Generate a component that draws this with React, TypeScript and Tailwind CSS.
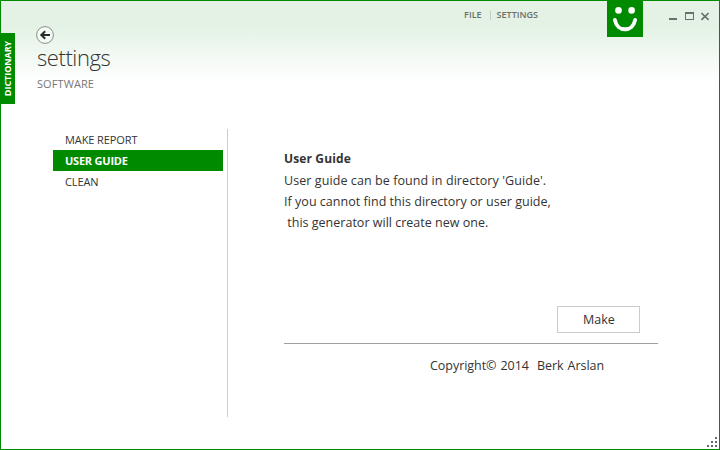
const menu = [
  { label: 'MAKE REPORT', active: false, spacing: 'tracking-[-0.09px]' },
  { label: 'USER GUIDE', active: true, spacing: 'tracking-[-0.22px]' },
  { label: 'CLEAN', active: false, spacing: 'tracking-[-0.1px]' },
];

const guideLines = [
  { text: "User guide can be found in directory 'Guide'.", spacing: 'tracking-[0.08px]' },
  { text: 'If you cannot find this directory or user guide,', spacing: 'tracking-[0.03px]' },
  { text: ' this generator will create new one.', spacing: 'tracking-[0.01px]' },
];

function DictionaryTab() {
  return (
    <div className="mt-8 flex h-[71px] w-[14px] items-center justify-center bg-[#008a00]">
      <span className="-rotate-90 whitespace-nowrap text-[9px] leading-none font-bold tracking-[-0.05px] text-white">DICTIONARY</span>
    </div>
  );
}

function BackIcon() {
  return (
    <svg className="-ml-px block" width="18" height="18" viewBox="0 0 18 18" fill="none">
      <circle cx="9" cy="9" r="8.4" fill="#f4faf4" stroke="#8a8d8a" strokeWidth="1" />
      <path d="M5.2 9H14" stroke="#2b2b2b" strokeWidth="2" />
      <path d="M9.2 5.2L5.3 9L9.2 12.8" stroke="#2b2b2b" strokeWidth="2" />
    </svg>
  );
}

function Smiley() {
  return (
    <svg className="block bg-[#008a00]" width="36" height="36" viewBox="0 0 36 36" fill="none">
      <circle cx="11.5" cy="9.4" r="3.3" fill="#fff" />
      <circle cx="24.6" cy="9.4" r="3.3" fill="#fff" />
      <path d="M7.9 19C10.2 31.4 25.8 31.4 28.1 19" stroke="#fff" strokeWidth="3.9" strokeLinecap="round" />
    </svg>
  );
}

function WindowControls() {
  return (
    <svg className="mt-[10px] ml-[25px] block" width="42" height="12" viewBox="0 0 42 12" fill="none" shapeRendering="crispEdges">
      <path d="M1 7H9V9H1Z" fill="#6b706b" />
      <path fillRule="evenodd" d="M17 1H26V9H17ZM18 3V8H25V3Z" fill="#6b706b" />
      <path d="M33.4 2L40.6 8.8M40.6 2L33.4 8.8" stroke="#6b706b" strokeWidth="1.7" shapeRendering="auto" />
    </svg>
  );
}

function SizeGrip() {
  return (
    <svg className="block" width="12" height="12" viewBox="0 0 12 12" fill="#686868" shapeRendering="crispEdges">
      <path d="M8 0h2v2h-2zM4 4h2v2h-2zM8 4h2v2h-2zM0 8h2v2h-2zM4 8h2v2h-2zM8 8h2v2h-2z" />
    </svg>
  );
}

export default function App() {
  return (
    <div className="flex h-[450px] w-[720px] flex-col overflow-hidden border border-[#008a00] bg-[linear-gradient(to_bottom,#e3f2e4_0px,#e3f2e4_25px,#ffffff_80px)] font-['Open_Sans','Noto_Sans',sans-serif] text-[#333]">
      <header className="flex h-[104px] shrink-0 items-start">
        <DictionaryTab />
        <div className="ml-[22px] pt-[25px]">
          <BackIcon />
          <h1 className="mt-[-3px] text-[22px] leading-[32px] font-light tracking-[-0.42px] text-[#333]">settings</h1>
          <div className="mt-[3px] text-[11px] leading-4 tracking-[0.08px] text-[#777]">SOFTWARE</div>
        </div>
        <nav className="mt-[8px] ml-auto flex items-center text-[9px] leading-3 font-semibold text-[#6b706b]">
          <span>FILE</span>
          <span className="mr-[6px] ml-[8px] h-[9px] w-px bg-[#c5cdc5]" />
          <span>SETTINGS</span>
        </nav>
        <div className="ml-[69px]">
          <Smiley />
        </div>
        <WindowControls />
        <div className="w-[9px]" />
      </header>

      <main className="flex h-[312px] shrink-0 pt-[24px]">
        <ul className="ml-[52px] w-[170px] text-[11px] leading-[21px]">
          {menu.map((item) => (
            <li key={item.label} className={`pl-3 ${item.spacing} ${item.active ? 'bg-[#008a00] font-bold text-white' : ''}`}>
              {item.label}
            </li>
          ))}
        </ul>
        <div className="ml-1 w-px bg-[#ccc]" />
        <section className="ml-14 flex w-[374px] flex-col pt-[19px] text-[13px] leading-[21px]">
          <h2 className="mb-px text-[12px] font-bold tracking-[0.13px]">User Guide</h2>
          {guideLines.map((line) => (
            <p key={line.text} className={`whitespace-pre text-[12.5px] ${line.spacing}`}>{line.text}</p>
          ))}
          <button className="mt-[73px] mr-[18px] h-[27px] w-[83px] self-end border border-[#ccc] bg-white pl-px text-[12.5px] leading-[15px]">Make</button>
          <hr className="mt-[10px] border-[#a0a0a0]" />
          <footer className="mt-[11px] ml-[146px] whitespace-pre text-[12.5px] tracking-[-0.04px] [word-spacing:0.8px]">Copyright© 2014  Berk Arslan</footer>
        </section>
      </main>

      <div className="mt-auto flex justify-end">
        <SizeGrip />
      </div>
    </div>
  );
}
